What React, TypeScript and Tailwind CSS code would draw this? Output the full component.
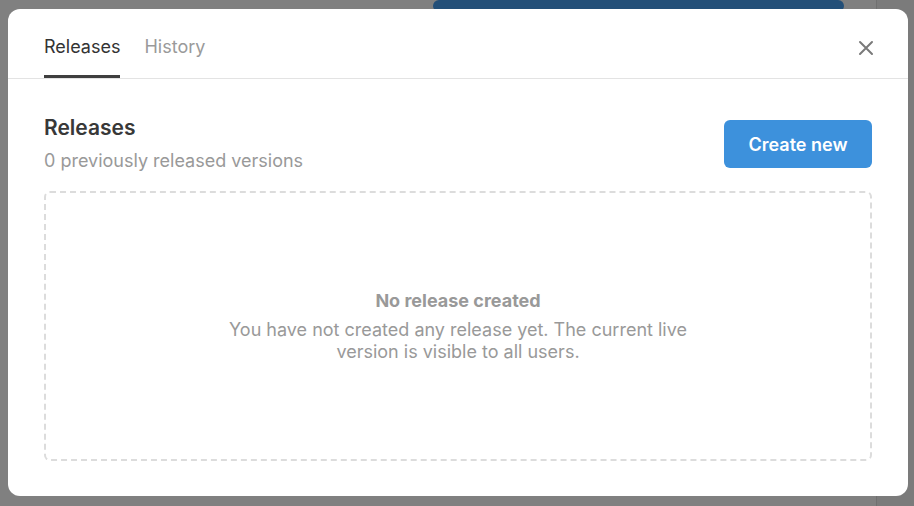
export default function App() {
  return (
    <div className="relative flex h-[506px] w-[914px] overflow-hidden bg-[#808080] font-['Inter','Liberation_Sans',sans-serif]">
      {/* page behind the overlay */}
      <div className="flex-1 pl-[433px]">
        <div className="h-[12px] w-[411px] rounded-[6px] bg-[#234f78]" />
      </div>
      <div className="w-[38px] border-l border-[#707070] bg-[#7b7b7b]" />

      <div className="absolute left-[8px] top-[9px] flex h-[487px] w-[900px] flex-col rounded-[12px] bg-white">
        <div className="flex h-[70px] items-end justify-between border-b border-[#e3e3e3] px-[36px]">
          <div className="flex gap-[24px]">
            <Tab label="Releases" active />
            <Tab label="History" />
          </div>
          <button className="mb-[20px] mr-[-4px] text-[#7a7a7a]">
            <svg width="20" height="20" viewBox="0 0 20 20" fill="none" stroke="currentColor" strokeWidth="2" strokeLinecap="round">
              <path d="M4 4L16 16M16 4L4 16" />
            </svg>
          </button>
        </div>
        <div className="flex flex-1 flex-col px-[36px] pb-[35px] pt-[37px]">
          <div className="flex items-start justify-between">
            <div>
              <h2 className="text-[21px] font-semibold leading-[24px] text-[#383838]">Releases</h2>
              <p className="mt-[9px] text-[18px] leading-[24px] text-[#999]">0 previously released versions</p>
            </div>
            <button className="mt-[4px] h-[48px] w-[148px] rounded-[6px] bg-[#3d91dc] text-[18px] font-semibold text-white">
              Create new
            </button>
          </div>
          <div className="mt-[18px] flex flex-1 flex-col items-center justify-center rounded-[6px] border-2 border-dashed border-[#dcdcdc] pt-[2px]">
            <p className="text-[18px] font-bold leading-[20px] text-[#999]">No release created</p>
            <p className="mt-[8px] w-[470px] text-center text-[18px] leading-[22px] text-[#999]">
              You have not created any release yet. The current live version is visible to all users.
            </p>
          </div>
        </div>
      </div>
    </div>
  );
}

function Tab({ label, active = false }: { label: string; active?: boolean }) {
  return (
    <div
      className={`border-b-[3px] pb-[17px] text-[18px] leading-[22px] ${
        active ? "border-[#3f3f3f] text-[#333]" : "border-transparent text-[#9a9a9a]"
      }`}
    >
      {label}
    </div>
  );
}
